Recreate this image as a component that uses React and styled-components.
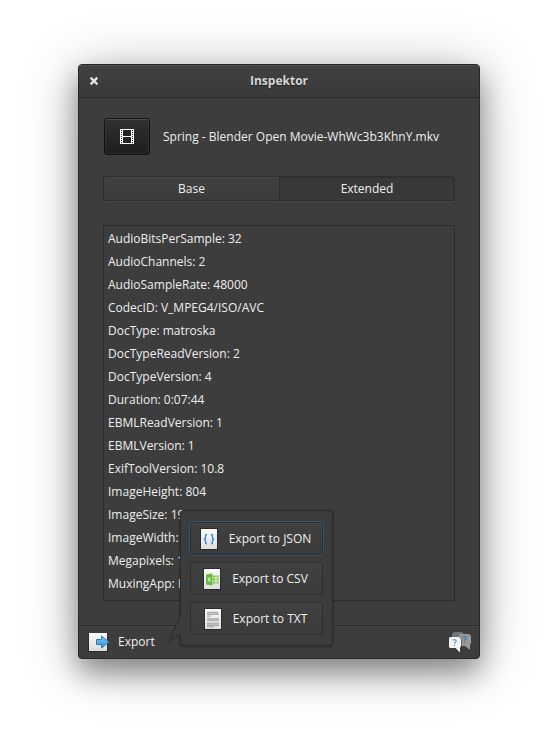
import React, { useState } from "react";
import styled, { createGlobalStyle, css } from "styled-components";

const GlobalStyle = createGlobalStyle`
  *, *::before, *::after { box-sizing: border-box; }
  body {
    margin: 0;
    background: #fff;
    color: #eee;
    font: 12px/16px "Open Sans", "Noto Sans", sans-serif;
  }
  button { font: inherit; color: inherit; }
`;

const Page = styled.div`
  padding: 64px 78px 92px;
`;

const Window = styled.main`
  border: 1px solid #282828;
  border-radius: 4px;
  background: #3d3d3d;
  box-shadow:
    inset 0 1px 0 #4b4b4b,
    0 14px 28px rgba(0, 0, 0, 0.36),
    0 6px 56px rgba(0, 0, 0, 0.28);
`;

const TitleBar = styled.header`
  display: grid;
  grid-template-columns: 32px 1fr 32px;
  align-items: center;
  height: 33px;
  border-bottom: 1px solid #292929;
  border-radius: 3px 3px 0 0;
  background: linear-gradient(#414141, #393939);
  box-shadow: inset 0 1px 0 #505050;
`;

const CloseButton = styled.button`
  display: flex;
  align-items: center;
  justify-content: center;
  height: 24px;
  padding: 0 2px 0 0;
  border: 0;
  background: none;
`;

const Title = styled.h1`
  margin: 0;
  font-size: 12px;
  font-weight: 700;
  line-height: 16px;
  text-align: center;
  color: #d6d6d6;
  text-shadow: 0 1px 1px rgba(0, 0, 0, 0.5);
`;

const Content = styled.div`
  display: flex;
  flex-direction: column;
  gap: 20px;
  padding: 20px 24px 24px;
`;

const FileRow = styled.div`
  display: flex;
  align-items: center;
  gap: 13px;
  padding: 0 1px 1px;
`;

const OpenButton = styled.button`
  display: flex;
  align-items: center;
  justify-content: center;
  width: 46px;
  height: 37px;
  flex: none;
  padding: 0;
  border: 1px solid #111;
  border-radius: 3px;
  background: linear-gradient(#303030, #1e1e1e);
  box-shadow: inset 0 1px 0 #525252, inset 0 0 0 1px rgba(255, 255, 255, 0.05);
`;

const FileName = styled.span`
  min-width: 0;
  overflow-wrap: anywhere;
`;

const raised = css`
  border: 1px solid #2d2d2d;
  background: linear-gradient(#404040, #3b3b3b);
  box-shadow: inset 0 1px 0 #464646, 0 1px 0 #434343;
`;

const Tabs = styled.div`
  display: grid;
  grid-template-columns: 1fr 1fr;
`;

const Tab = styled.button`
  ${raised}
  height: 25px;
  padding: 0;
  border-radius: 3px 0 0 3px;
  border-right-width: 0;

  &:last-child {
    border-radius: 0 3px 3px 0;
    border-right-width: 1px;
  }

  &[aria-selected="true"] {
    background: #383838;
    box-shadow: inset 0 1px 1px #323232, 0 1px 0 #444;
  }
`;

const Panel = styled.section`
  margin-top: 4px;
  padding: 1px 4px 5px;
  border: 1px solid #2c2c2c;
`;

const TagList = styled.ul`
  margin: 0;
  padding: 0;
  list-style: none;
`;

const Tag = styled.li`
  line-height: 23px;
`;

const ActionBar = styled.footer`
  display: flex;
  align-items: center;
  justify-content: space-between;
  height: 33px;
  padding: 0 7px 0 8px;
  border-top: 1px solid #2b2b2b;
  box-shadow: inset 0 1px 0 #444;
`;

const ExportMenu = styled.div`
  position: relative;
`;

const FlatButton = styled.button`
  display: flex;
  align-items: center;
  gap: 7px;
  padding: 0;
  border: 0;
  background: none;
`;

const Popover = styled.div`
  position: absolute;
  left: 93px;
  bottom: 8px;
  display: flex;
  flex-direction: column;
  gap: 7px;
  width: 153px;
  padding: 11px 9px 10px;
  border: 1px solid #2a2a2a;
  border-radius: 4px;
  background: #3c3c3c;
  box-shadow: 0 1px 3px rgba(0, 0, 0, 0.35);
`;

const PopoverTail = styled.svg`
  position: absolute;
  right: 100%;
  bottom: 0;
`;

const MenuButton = styled.button`
  ${raised}
  display: flex;
  align-items: center;
  justify-content: center;
  gap: 8px;
  height: 33px;
  padding: 0 5px 0 0;
  border-radius: 3px;

  &:focus {
    outline: 1px solid #35536d;
    outline-offset: 0;
    border-color: #24303a;
  }
`;

const CloseIcon = () => (
  <svg width="10" height="10" viewBox="0 0 10 10" aria-hidden="true">
    <path d="M2.500 2.500l5 5M7.500 2.500l-5 5" stroke="#e4e4e4" strokeWidth="2.400" strokeLinecap="square" />
  </svg>
);

const FilmIcon = () => (
  <svg width="14" height="15" viewBox="0 0 14 15" shapeRendering="crispEdges" aria-hidden="true">
    <path fill="#fff" d="M0 0h14v15H0z" />
    <path fill="#232323" d="M3 1h8v6H3zM3 8h8v6H3z" />
    <path stroke="#232323" strokeDasharray="1 1" d="M1.500 1v13M12.500 1v13" />
  </svg>
);

const Sheet = ({ children }) => (
  <svg width="24" height="24" viewBox="0 0 24 24" aria-hidden="true">
    <defs>
      <linearGradient id="sheet" x1="0" y1="0" x2="0" y2="1">
        <stop offset="0" stopColor="#fafafa" />
        <stop offset="1" stopColor="#dedede" />
      </linearGradient>
    </defs>
    <path fill="#222" opacity=".7" d="M3 1h18v22H3z" />
    <path fill="url(#sheet)" d="M4 2h16v20H4z" />
    {children}
  </svg>
);

const JsonIcon = () => (
  <Sheet>
    <path
      fill="none"
      stroke="#3d86d8"
      strokeWidth="1.400"
      d="M10 7.500C8 7.500 8.600 9 8.600 10.300S8.200 12 7 12.200c1.200.2 1.600.7 1.600 1.900s-.6 2.700 1.400 2.700M14 7.500c2 0 1.400 1.500 1.400 2.800s.4 1.700 1.600 1.900c-1.200.2-1.600.7-1.600 1.900s.6 2.700-1.400 2.700"
    />
  </Sheet>
);

const CsvIcon = () => (
  <Sheet>
    <path fill="#69b83c" d="M6 7.500l6.500-1v12L6 17.500z" />
    <path fill="none" stroke="#e6f5dc" d="M8 10.500l2.500 4M10.500 10.500l-2.500 4" />
    <path fill="#76c442" d="M13 8.500h5.500v8H13z" />
    <path stroke="#fff" strokeWidth=".8" d="M13 11h5.500M13 14h5.500M16 8.500v8" />
  </Sheet>
);

const TxtIcon = () => (
  <Sheet>
    <path
      stroke="#b0b0b0"
      strokeWidth="1.400"
      d="M6 5.500h11M6 7.300h12M6 9.100h4M6 11.700h12M6 13.500h12M6 16.500h12M6 18.300h12M6 19.500h7"
    />
  </Sheet>
);

const ExportIcon = () => (
  <svg width="24" height="24" viewBox="0 0 24 24" aria-hidden="true">
    <defs>
      <linearGradient id="arrow" x1="0" y1="0" x2="0" y2="1">
        <stop offset="0" stopColor="#7acbf5" />
        <stop offset="1" stopColor="#2c91d2" />
      </linearGradient>
      <linearGradient id="exportSheet" x1="0" y1="0" x2="0" y2="1">
        <stop offset="0" stopColor="#fafafa" />
        <stop offset="1" stopColor="#dcdcdc" />
      </linearGradient>
    </defs>
    <path fill="#222" opacity=".6" d="M1 3h20v19H1z" />
    <path fill="url(#exportSheet)" d="M2 3h18v18H2z" />
    <path
      fill="url(#arrow)"
      stroke="#2673a8"
      strokeWidth=".9"
      strokeLinejoin="round"
      d="M9.500 9.500h5V6l7.500 6-7.500 6v-3.500h-5z"
    />
  </svg>
);

const HelpIcon = () => (
  <svg width="24" height="24" viewBox="0 0 24 24" aria-hidden="true">
    <path fill="#747474" d="M6 2h8l2 2v5H4V4z" />
    <path fill="#989898" d="M12 4h9l2 2v7l-1 2v5l-5-4h-6V6z" />
    <path fill="#333" opacity=".5" d="M2 7h10l2 2v8l-1 1v5l-5-4H2l-1-2V9z" />
    <path fill="#f4f4f4" d="M2 7h9l2 2v7l-1 2v4.500L7.500 18H2l-1-1V8z" />
    <path
      fill="none"
      stroke="#6c9bc8"
      strokeWidth="1.300"
      d="M5 10.500c1-1.500 4-.7 3 1.100-.5.800-1.500.9-1.500 2.100M6.500 14.700v1.300"
    />
    <path
      fill="none"
      stroke="#4f78a8"
      strokeWidth="1.300"
      d="M15 7.500c1-1.500 4-.7 3 1.100-.5.800-1.500.9-1.500 2.100M16.500 11.700V13"
    />
  </svg>
);

const TAGS = [
  ["AudioBitsPerSample", "32"],
  ["AudioChannels", "2"],
  ["AudioSampleRate", "48000"],
  ["CodecID", "V_MPEG4/ISO/AVC"],
  ["DocType", "matroska"],
  ["DocTypeReadVersion", "2"],
  ["DocTypeVersion", "4"],
  ["Duration", "0:07:44"],
  ["EBMLReadVersion", "1"],
  ["EBMLVersion", "1"],
  ["ExifToolVersion", "10.8"],
  ["ImageHeight", "804"],
  ["ImageSize", "1920x804"],
  ["ImageWidth", "1920"],
  ["Megapixels", "1.5"],
  ["MuxingApp", "Lavf"],
];

const FORMATS = [
  { name: "JSON", Icon: JsonIcon },
  { name: "CSV", Icon: CsvIcon },
  { name: "TXT", Icon: TxtIcon },
];

export default function App() {
  const [tab, setTab] = useState("Extended");
  const [open, setOpen] = useState(true);

  return (
    <>
      <GlobalStyle />
      <Page>
        <Window>
          <TitleBar>
            <CloseButton aria-label="Close">
              <CloseIcon />
            </CloseButton>
            <Title>Inspektor</Title>
          </TitleBar>
          <Content>
            <FileRow>
              <OpenButton aria-label="Open file">
                <FilmIcon />
              </OpenButton>
              <FileName>Spring - Blender Open Movie-WhWc3b3KhnY.mkv</FileName>
            </FileRow>
            <Tabs role="tablist">
              {["Base", "Extended"].map((name) => (
                <Tab
                  key={name}
                  role="tab"
                  aria-selected={tab === name}
                  onClick={() => setTab(name)}
                >
                  {name}
                </Tab>
              ))}
            </Tabs>
            <Panel role="tabpanel" aria-label={tab}>
              <TagList>
                {TAGS.map(([key, value]) => (
                  <Tag key={key}>{`${key}: ${value}`}</Tag>
                ))}
              </TagList>
            </Panel>
          </Content>
          <ActionBar>
            <ExportMenu>
              <FlatButton aria-expanded={open} onClick={() => setOpen(!open)}>
                <ExportIcon />
                Export
              </FlatButton>
              {open && (
                <Popover>
                  <PopoverTail width="13" height="32" viewBox="0 0 13 32" aria-hidden="true">
                    <path fill="#3c3c3c" d="M13 2L1 28l12-6z" />
                    <path fill="none" stroke="#2a2a2a" d="M12.500 2L1 28l11.500-6" />
                  </PopoverTail>
                  {FORMATS.map(({ name, Icon }, i) => (
                    <MenuButton key={name} autoFocus={i === 0}>
                      <Icon />
                      Export to {name}
                    </MenuButton>
                  ))}
                </Popover>
              )}
            </ExportMenu>
            <FlatButton aria-label="Help">
              <HelpIcon />
            </FlatButton>
          </ActionBar>
        </Window>
      </Page>
    </>
  );
}
